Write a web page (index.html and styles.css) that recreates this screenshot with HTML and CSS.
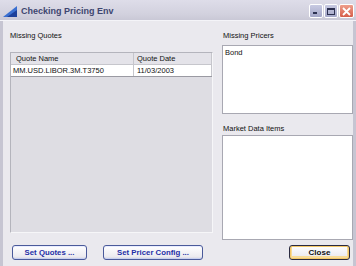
FILE: index.html
```html
<!DOCTYPE html>
<html lang="en">
<head>
  <meta charset="UTF-8">
  <title>Checking Pricing Env</title>
  <link rel="stylesheet" href="styles.css">
</head>
<body>
  <div class="window">
    <div class="titlebar">
      <svg class="app-icon" width="14" height="12" viewBox="0 0 14 12">
        <polygon points="0,12 14,1 14,12" fill="#3a6fd0"/>
        <polygon points="4,12 14,5 14,12" fill="#1c3f9a"/>
      </svg>
      <span class="title">Checking Pricing Env</span>
      <div class="controls">
        <span class="ctl ctl-min"><i></i></span>
        <span class="ctl ctl-max"><i></i></span>
        <span class="ctl ctl-close">
          <svg width="9" height="9" viewBox="0 0 9 9"><path d="M1 1L8 8M8 1L1 8" stroke="#fff" stroke-width="1.8"/></svg>
        </span>
      </div>
    </div>
    <div class="frame">
      <div class="columns">
        <div class="col-left">
          <div class="label">Missing Quotes</div>
          <div class="table-panel">
            <div class="row head">
              <div class="cell name">Quote Name</div>
              <div class="cell date">Quote Date</div>
            </div>
            <div class="row data">
              <div class="cell name">MM.USD.LIBOR.3M.T3750</div>
              <div class="cell date">11/03/2003</div>
            </div>
          </div>
        </div>
        <div class="col-right">
          <div class="label">Missing Pricers</div>
          <div class="list pricers">Bond</div>
          <div class="label second">Market Data Items</div>
          <div class="list items"></div>
        </div>
      </div>
      <div class="buttons">
        <button type="button" class="btn btn-quotes">Set Quotes ...</button>
        <button type="button" class="btn btn-config">Set Pricer Config ...</button>
        <button type="button" class="btn btn-close">Close</button>
      </div>
    </div>
  </div>
</body>
</html>
```

FILE: styles.css
```css
/* window */
body {
  margin: 0;
  font-family: "Liberation Sans", Arial, sans-serif;
  font-size: 7.5px;
  color: #111;
}
.window {
  width: 356px;
  height: 266px;
  display: flex;
  flex-direction: column;
  background-color: #eae9ee;
}
.titlebar {
  height: 20px;
  display: flex;
  align-items: center;
  background: linear-gradient(#dedde9, #d2d1de 70%, #c9c8d6);
  border-bottom: 1px solid #f4f4f8;
}
.app-icon {
  margin: 2px 4px 0 3px;
}
.title {
  font-size: 9px;
  font-weight: bold;
  color: #3e4670;
  margin-top: 1px;
}
.controls {
  margin-left: auto;
  margin-right: 2px;
  margin-top: 2px;
  display: flex;
  gap: 1px;
}
.ctl {
  width: 14px;
  height: 14px;
  border: 1px solid #fff;
  border-radius: 2px;
  background: linear-gradient(#c8cae2, #a4a7c8);
  display: flex;
  align-items: center;
  justify-content: center;
  box-sizing: border-box;
  position: relative;
}
.ctl-min i {
  position: absolute;
  left: 3px;
  bottom: 3px;
  width: 4px;
  height: 2px;
  background: #2c3050;
}
.ctl-max i {
  width: 8px;
  height: 7px;
  box-sizing: border-box;
  border: 1px solid #2c3050;
  border-top-width: 2px;
}
.ctl-close {
  width: 15px;
  background: linear-gradient(#ee9e8c, #d65e4a);
}
.frame {
  flex: 1;
  border-left: 3px solid #c6c5d2;
  border-right: 3px solid #c6c5d2;
  padding: 9px 0 0 7px;
}
.columns {
  display: flex;
  gap: 9px;
  height: 210px;
}
.label {
  height: 12px;
  line-height: 12px;
}
.col-left {
  width: 203px;
}
.col-left .label {
  margin-bottom: 10px;
}
.table-panel {
  height: 181px;
  box-sizing: border-box;
  background-color: #dedde3;
  border: 1px solid #b4b4bc;
  border-right-color: #f6f6f8;
  border-bottom-color: #f6f6f8;
}
.row {
  display: flex;
  height: 11px;
  line-height: 11px;
}
.row.head {
  background-color: #e4e3e9;
  border-bottom: 1px solid #c6c6cc;
}
.row.data {
  background-color: #fff;
  border-bottom: 1px solid #9a9aa2;
}
.cell {
  box-sizing: border-box;
  padding-left: 2px;
  border-right: 1px solid #c6c6cc;
}
.cell.name {
  width: 123px;
}
.cell.date {
  flex: 1;
  padding-left: 3px;
}
.row.head .cell.name {
  padding-left: 5px;
}
.col-right {
  width: 131px;
}
.col-right .label {
  padding-left: 1px;
  margin-bottom: 3px;
}
.col-right .label.second {
  margin-top: 9px;
  margin-bottom: 0;
}
.list {
  box-sizing: border-box;
  background-color: #fff;
  border: 1px solid #a8a8b2;
  padding: 2px 2px;
}
.list.pricers {
  height: 69px;
}
.list.items {
  height: 105px;
}
/* buttons */
.buttons {
  display: flex;
  margin-top: 5px;
  padding-left: 2px;
  padding-right: 3px;
}
.btn {
  height: 15px;
  padding: 0;
  font-family: "Liberation Sans", Arial, sans-serif;
  font-size: 7.8px;
  font-weight: bold;
  border-radius: 3px;
  background: linear-gradient(#ffffff, #ecebf0 80%, #d6d5de);
  border: 1px solid #4a5a9a;
  color: #1f2fa6;
  box-shadow: inset 0 -1px 0 #c8d0f0, inset 0 1px 0 #e8ecff;
}
.btn-quotes {
  width: 75px;
}
.btn-config {
  width: 100px;
  margin-left: 16px;
}
.btn-close {
  width: 61px;
  margin-left: auto;
  color: #111;
  font-size: 8px;
  border-color: #2a2a40;
  box-shadow: inset 0 0 0 1px #f4c868, inset 0 -1px 0 2px #f8dc98;
}
```
